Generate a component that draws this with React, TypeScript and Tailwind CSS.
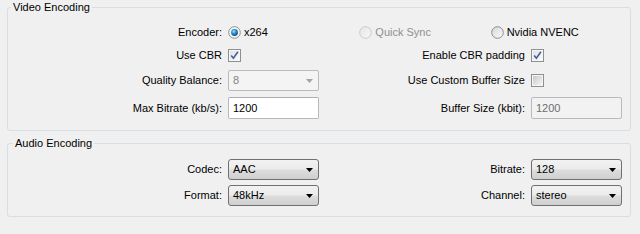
import React from 'react';

type RadioState = 'on' | 'off' | 'disabled';

function Radio({ state }: { state: RadioState }) {
  const ring = state === 'disabled' ? '#c9c9c9' : '#8c8e8f';
  return (
    <svg width="13" height="13" viewBox="0 0 13 13" className="shrink-0">
      <defs>
        <linearGradient id="radio-off" x1="0" y1="0" x2="1" y2="1">
          <stop offset="0" stopColor="#d6d6d6" />
          <stop offset="1" stopColor="#fbfbfb" />
        </linearGradient>
        <linearGradient id="radio-dis" x1="0" y1="0" x2="1" y2="1">
          <stop offset="0" stopColor="#e6e6e6" />
          <stop offset="1" stopColor="#f7f7f7" />
        </linearGradient>
        <radialGradient id="radio-dot" cx="0.4" cy="0.35" r="0.7">
          <stop offset="0" stopColor="#9be6ff" />
          <stop offset="0.45" stopColor="#2b91d4" />
          <stop offset="1" stopColor="#0b3f6e" />
        </radialGradient>
      </defs>
      <circle
        cx="6.5"
        cy="6.5"
        r="5.8"
        fill={state === 'on' ? '#f6f6f6' : state === 'off' ? 'url(#radio-off)' : 'url(#radio-dis)'}
        stroke={ring}
      />
      {state === 'on' && <circle cx="6.5" cy="6.5" r="3.4" fill="url(#radio-dot)" />}
    </svg>
  );
}

function Check({ checked }: { checked?: boolean }) {
  return (
    <svg width="13" height="13" viewBox="0 0 13 13" className="shrink-0">
      <defs>
        <linearGradient id="check-off" x1="0" y1="0" x2="1" y2="1">
          <stop offset="0" stopColor="#c6c9cd" />
          <stop offset="1" stopColor="#f5f5f5" />
        </linearGradient>
        <linearGradient id="check-on" x1="0" y1="0" x2="1" y2="1">
          <stop offset="0" stopColor="#dfe3e8" />
          <stop offset="1" stopColor="#fafafa" />
        </linearGradient>
      </defs>
      <rect x="0.5" y="0.5" width="12" height="12" fill="#f6f6f6" stroke="#8e8f8f" />
      <rect x="2" y="2" width="9" height="9" fill={checked ? 'url(#check-on)' : 'url(#check-off)'} />
      {checked && (
        <path d="M3.2 6.4 L5.4 9.2 L9.9 2.8" stroke="#4a5f97" strokeWidth="1.6" fill="none" />
      )}
    </svg>
  );
}

function Arrow({ color = '#000' }: { color?: string }) {
  return (
    <svg width="7" height="4" viewBox="0 0 7 4" className="shrink-0">
      <path d="M0 0h7L3.5 4z" fill={color} />
    </svg>
  );
}

function Combo({ value, disabled }: { value: string; disabled?: boolean }) {
  if (disabled) {
    return (
      <div className="w-[91px] h-[21px] flex items-center justify-between pl-[4px] pr-[5px] border border-[#b9bcbf] rounded-[2px] bg-[#f4f4f4] text-[#838383]">
        <span>{value}</span>
        <Arrow color="#a3a3a3" />
      </div>
    );
  }
  return (
    <div className="w-[91px] h-[21px] flex items-center justify-between pl-[4px] pr-[5px] border border-[#707070] rounded-[3px] bg-[linear-gradient(#f2f2f2_0%,#ebebeb_48%,#dddddd_52%,#cfcfcf_100%)]">
      <span>{value}</span>
      <Arrow />
    </div>
  );
}

function Edit({ value, disabled }: { value: string; disabled?: boolean }) {
  return (
    <div
      className={`w-[91px] h-[22px] flex items-center pl-[4px] border rounded-[2px] ${
        disabled
          ? 'bg-[#f2f2f2] border-[#b8babd] text-[#6d6d6d]'
          : 'bg-white border-[#b5b8bd] border-t-[#abadb3] text-black'
      }`}
    >
      {value}
    </div>
  );
}

export default function App() {
  return (
    <div className="w-[640px] h-[234px] bg-[#f0f0f0] px-[7px] text-[11px] leading-[13px] text-black font-['Liberation_Sans',Arial,sans-serif] overflow-hidden">
      {/* Video Encoding */}
      <fieldset className="w-[624px] border border-[#d5dfe5] rounded-[3px] pt-[9px] pb-[11px] pr-[8px]">
        <legend className="ml-[3px] px-[2px] leading-[15px]">Video Encoding</legend>
        <div className="grid grid-cols-[214px_91px_200px_91px] grid-rows-[17px_17px_21px_22px] gap-x-[6px] gap-y-[6px] items-center">
          <span className="justify-self-end">Encoder:</span>
          <div className="col-span-3 grid grid-cols-3">
            <label className="flex items-center gap-[3px]">
              <Radio state="on" />
              x264
            </label>
            <label className="flex items-center gap-[3px] text-[#8f8f8f]">
              <Radio state="disabled" />
              Quick Sync
            </label>
            <label className="flex items-center gap-[3px]">
              <Radio state="off" />
              Nvidia NVENC
            </label>
          </div>

          <span className="justify-self-end">Use CBR</span>
          <Check checked />
          <span className="justify-self-end">Enable CBR padding</span>
          <Check checked />

          <span className="justify-self-end">Quality Balance:</span>
          <Combo value="8" disabled />
          <span className="justify-self-end">Use Custom Buffer Size</span>
          <Check />

          <span className="justify-self-end">Max Bitrate (kb/s):</span>
          <Edit value="1200" />
          <span className="justify-self-end">Buffer Size (kbit):</span>
          <Edit value="1200" disabled />
        </div>
      </fieldset>

      {/* Audio Encoding */}
      <fieldset className="mt-[5px] w-[624px] border border-[#d5dfe5] rounded-[3px] pt-[8px] pb-[10px] pr-[8px]">
        <legend className="ml-[5px] px-[2px] leading-[15px]">Audio Encoding</legend>
        <div className="grid grid-cols-[214px_91px_200px_91px] grid-rows-[21px_21px] gap-x-[6px] gap-y-[5px] items-center">
          <span className="justify-self-end">Codec:</span>
          <Combo value="AAC" />
          <span className="justify-self-end">Bitrate:</span>
          <Combo value="128" />

          <span className="justify-self-end">Format:</span>
          <Combo value="48kHz" />
          <span className="justify-self-end">Channel:</span>
          <Combo value="stereo" />
        </div>
      </fieldset>
    </div>
  );
}
